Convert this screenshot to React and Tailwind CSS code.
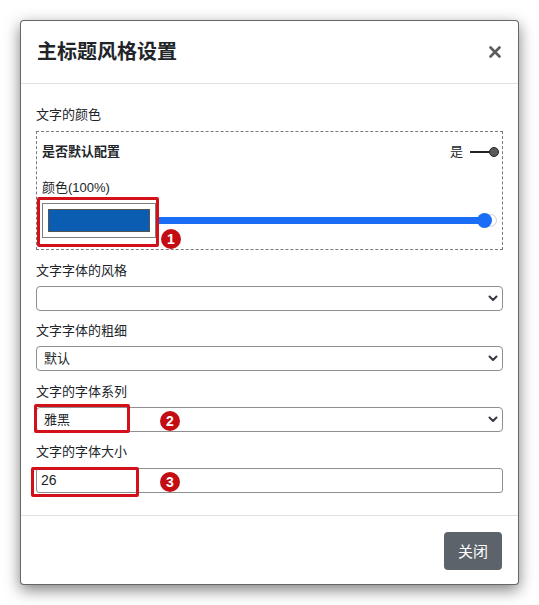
import React from "react";

function Chevron() {
  return (
    <svg width="10" height="7" viewBox="0 0 10 7" className="shrink-0">
      <path d="M1.5 1.5 L5 5 L8.5 1.5" fill="none" stroke="#343a40" strokeWidth="2" strokeLinecap="round" strokeLinejoin="round" />
    </svg>
  );
}

function SelectBox({ value }) {
  return (
    <div className="h-[25px] border border-[#8f8f8f] rounded-[4px] pl-[7px] pr-[4px] flex items-center justify-between text-[13px] text-[#212529] bg-white">
      <span className="leading-[20px]">{value}</span>
      <Chevron />
    </div>
  );
}

function Badge({ n, cls }) {
  return (
    <div className={"absolute w-[20px] h-[20px] rounded-full bg-[#c40d12] text-white text-[14px] font-bold flex items-center justify-center leading-none " + cls}>
      {n}
    </div>
  );
}

export default function App() {
  return (
    <div
      className="relative w-[539px] h-[605px] bg-white overflow-hidden"
      style={{ fontFamily: '"Liberation Sans", "Noto Sans CJK SC", sans-serif' }}
    >
      <div className="ml-[20px] mt-[20px] w-[499px] bg-white border border-black/60 rounded-[4px] shadow-[0_5px_15px_rgba(0,0,0,0.5)]">
        {/* header */}
        <div className="px-4 py-4 flex items-center justify-between border-b border-[#dee2e6]">
          <div className="text-[20px] font-bold leading-[30px] text-[#212529]">主标题风格设置</div>
          <svg width="12" height="12" viewBox="0 0 12 12" className="mr-[1px]">
            <path d="M1.5 1.5 L10.5 10.5 M10.5 1.5 L1.5 10.5" stroke="#5c5c5c" strokeWidth="2.6" strokeLinecap="round" />
          </svg>
        </div>

        {/* body */}
        <div className="px-[15px] pt-[20px] pb-[22px] text-[#212529] text-[13px]">
          <div className="leading-[22px] mb-[5px]">文字的颜色</div>
          <div className="border border-dashed border-[#7a7a7a] pt-[10px] pb-[11px]">
            <div className="h-[20px] pl-[5px] pr-[3px] flex items-center justify-between">
              <span className="font-bold leading-[20px]">是否默认配置</span>
              <div className="flex items-center">
                <span className="leading-[20px] mr-[7px]">是</span>
                <div className="w-[20px] h-[2px] bg-[#222]"></div>
                <div className="w-[10px] h-[10px] rounded-full bg-[#5a5a5a] border-[1.5px] border-[#222] -ml-[1px]"></div>
              </div>
            </div>
            <div className="mt-[16px] pl-[5px] leading-[20px] h-[20px]">颜色(100%)</div>
            <div className="mt-[5px] h-[35px] pl-[5px] pr-[5px] flex items-center">
              <div className="w-[114px] h-[35px] border border-[#7d7d7d] bg-white p-[5px] shrink-0">
                <div className="w-full h-full bg-[#0b5db1] border border-[#555]"></div>
              </div>
              <div className="relative flex-1 h-[16px]">
                <div className="absolute right-0 top-[1.5px] w-[13px] h-[13px] rounded-full border border-[#cfcfcf] bg-white"></div>
                <div className="absolute left-0 right-[10px] top-[4.5px] h-[7px] bg-[#1a6ef5]"></div>
                <div className="absolute right-[5px] top-[0.5px] w-[15px] h-[15px] rounded-full bg-[#1a6ef5]"></div>
              </div>
            </div>
          </div>

          <div className="mt-[11px]">
            <div className="leading-[20px] h-[20px] mb-[5px]">文字字体的风格</div>
            <SelectBox value="" />
          </div>
          <div className="mt-[10px]">
            <div className="leading-[20px] h-[20px] mb-[5px]">文字字体的粗细</div>
            <SelectBox value="默认" />
          </div>
          <div className="mt-[11px]">
            <div className="leading-[20px] h-[20px] mb-[5px]">文字的字体系列</div>
            <SelectBox value="雅黑" />
          </div>
          <div className="mt-[10px]">
            <div className="leading-[20px] h-[20px] mb-[6px]">文字的字体大小</div>
            <div className="h-[25px] border border-[#8f8f8f] rounded-[3px] pl-[4px] flex items-center text-[14px] text-[#212529]">
              26
            </div>
          </div>
        </div>

        {/* footer */}
        <div className="border-t border-[#dee2e6] px-4 pt-4 pb-[14px] flex justify-end">
          <button className="h-[38px] px-[14px] rounded-[4px] bg-[#5c636a] text-white text-[15px] leading-none">关闭</button>
        </div>
      </div>

      {/* annotations */}
      <div className="absolute left-[37px] top-[197px] w-[122px] h-[50px] border-[3px] border-[#d3111b] rounded-[2px]"></div>
      <div className="absolute left-[34px] top-[404px] w-[96px] h-[29px] border-[3px] border-[#d3111b] rounded-[2px]"></div>
      <div className="absolute left-[31px] top-[467px] w-[108px] h-[30px] border-[3px] border-[#d3111b] rounded-[2px]"></div>
      <Badge n="1" cls="left-[161px] top-[229px]" />
      <Badge n="2" cls="left-[160px] top-[411px]" />
      <Badge n="3" cls="left-[160px] top-[472px]" />
    </div>
  );
}
